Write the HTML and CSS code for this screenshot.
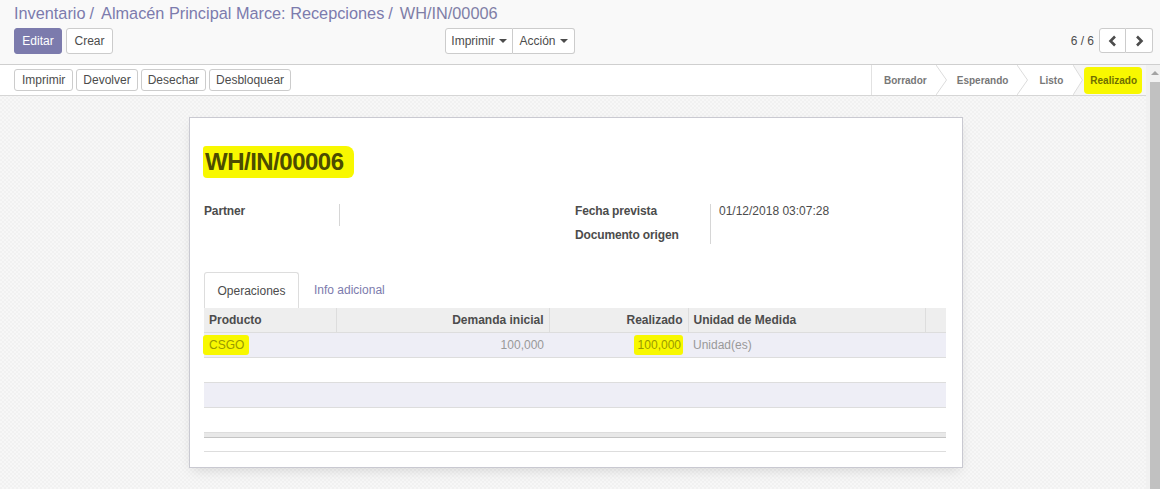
FILE: index.html
```html
<!DOCTYPE html>
<html lang="es">
<head>
<meta charset="utf-8">
<title>WH/IN/00006</title>
<link rel="stylesheet" href="styles.css">
</head>
<body>
<div class="cp">
  <div class="bc">
    <span class="bc-link">Inventario</span><span class="bc-sep">/</span><span class="bc-link">Almacén Principal Marce: Recepciones</span><span class="bc-sep">/</span><span class="bc-active">WH/IN/00006</span>
  </div>
  <div class="cp-row">
    <div class="cp-left">
      <div class="cp-buttons">
        <button class="btn btn-primary">Editar</button>
        <button class="btn">Crear</button>
      </div>
      <div class="btn-group">
        <button class="btn btn-dd">Imprimir <span class="caret"></span></button>
        <button class="btn btn-dd">Acción <span class="caret"></span></button>
      </div>
    </div>
    <div class="cp-right">
      <span class="pager-val">6 / 6</span>
      <div class="btn-group">
        <button class="btn btn-pager"><svg width="10" height="12" viewBox="0 0 10 12"><polyline points="7,1.5 2.5,6 7,10.5" fill="none" stroke="#4c4c4c" stroke-width="2.6"/></svg></button>
        <button class="btn btn-pager"><svg width="10" height="12" viewBox="0 0 10 12"><polyline points="3,1.5 7.5,6 3,10.5" fill="none" stroke="#4c4c4c" stroke-width="2.6"/></svg></button>
      </div>
    </div>
  </div>
</div>
<div class="main">
  <div class="content">
    <div class="statusbar">
      <div class="sb-buttons">
        <button class="btn btn-sb">Imprimir</button>
        <button class="btn btn-sb">Devolver</button>
        <button class="btn btn-sb">Desechar</button>
        <button class="btn btn-sb">Desbloquear</button>
      </div>
      <div class="states">
        <span class="state s1">Borrador</span>
        <svg class="arrow" width="11" height="30" viewBox="0 0 11 30"><polyline points="0,0 10.5,15 0,30" fill="none" stroke="#dcdcdc"/></svg>
        <span class="state s2">Esperando</span>
        <svg class="arrow" width="11" height="30" viewBox="0 0 11 30"><polyline points="0,0 10.5,15 0,30" fill="none" stroke="#dcdcdc"/></svg>
        <span class="state s3">Listo</span>
        <svg class="arrow" width="10" height="30" viewBox="0 0 10 30"><polygon points="0,0 10,0 10,30 0,30 9.5,15" fill="#f6f6f6"/><polyline points="0,0 9.5,15 0,30" fill="none" stroke="#dcdcdc"/></svg>
        <span class="state state-active"><span class="hl hl-state">Realizado</span></span>
      </div>
    </div>
    <div class="sheet-bg">
      <div class="sheet">
        <h1 class="title"><span class="hl hl-title">WH/IN/00006</span></h1>
        <div class="groups">
          <div class="group">
            <div class="field-row r1">
              <div class="label">Partner</div>
              <div class="value"></div>
            </div>
          </div>
          <div class="group">
            <div class="field-row r1">
              <div class="label">Fecha prevista</div>
              <div class="value">01/12/2018 03:07:28</div>
            </div>
            <div class="field-row r2">
              <div class="label">Documento origen</div>
              <div class="value"></div>
            </div>
          </div>
        </div>
        <div class="tabs">
          <div class="tab tab-active">Operaciones</div>
          <div class="tab">Info adicional</div>
        </div>
        <table class="list">
          <thead>
            <tr>
              <th class="c1">Producto</th>
              <th class="c2 num">Demanda inicial</th>
              <th class="c3 num">Realizado</th>
              <th class="c4">Unidad de Medida</th>
              <th class="c5"></th>
            </tr>
          </thead>
          <tbody>
            <tr class="odd">
              <td><span class="hl hl-cell">CSGO</span></td>
              <td class="num">100,000</td>
              <td class="num"><span class="hl hl-cell">100,000</span></td>
              <td>Unidad(es)</td>
              <td></td>
            </tr>
            <tr><td colspan="5"></td></tr>
            <tr class="odd"><td colspan="5"></td></tr>
            <tr><td colspan="5"></td></tr>
          </tbody>
          <tfoot>
            <tr class="foot1"><td colspan="5"></td></tr>
            <tr class="foot2"><td colspan="5"></td></tr>
          </tfoot>
        </table>
      </div>
    </div>
  </div>
  <div class="scrollbar">
    <div class="sc-up"></div>
    <div class="sc-thumb"></div>
  </div>
</div>
</body>
</html>
```

FILE: styles.css
```css
* { box-sizing: border-box; }
html, body { margin: 0; padding: 0; }
body {
  width: 1160px;
  height: 489px;
  overflow: hidden;
  font-family: "Liberation Sans", Arial, sans-serif;
  font-size: 12px;
  color: #4c4c4c;
  background: #f9f9f9;
}
button { font-family: inherit; }

/* Control panel */
.cp {
  height: 65px;
  background: #f9f9f9;
  border-bottom: 1px solid #cfcfcf;
  padding: 3px 7px 0 14px;
}
.bc {
  font-size: 16.3px;
  line-height: 21px;
  height: 21px;
  color: #7c7bad;
  white-space: nowrap;
}
.bc-sep { margin: 0 7px 0 4px; color: #7c7bad; }
.bc-active { color: #7f7ea6; }
.cp-row {
  display: flex;
  margin-top: 4px;
  height: 26px;
}
.cp-left {
  width: 561px;
  display: flex;
  justify-content: space-between;
}
.cp-buttons { display: flex; gap: 4px; }
.cp-right {
  flex: 1;
  display: flex;
  justify-content: flex-end;
  align-items: center;
  gap: 5px;
  height: 25px;
}
.btn {
  height: 26px;
  padding: 0 10px;
  border: 1px solid #cccccc;
  border-radius: 3px;
  background: #ffffff;
  color: #4c4c4c;
  font-size: 12px;
  line-height: 24px;
  display: inline-flex;
  align-items: center;
  justify-content: center;
  white-space: nowrap;
}
.btn-primary {
  background: #7c7bad;
  border-color: #7c7bad;
  color: #ffffff;
  width: 48px;
  padding: 0;
}
.cp-buttons .btn:not(.btn-primary) { width: 47px; padding: 0; }
.btn-group { display: flex; }
.btn-group .btn { border-radius: 0; }
.btn-group .btn:first-child { border-radius: 3px 0 0 3px; }
.btn-group .btn:last-child { border-radius: 0 3px 3px 0; border-left: 0; }
.btn-dd:first-child { width: 68px; padding: 0; }
.btn-dd:last-child { width: 62px; padding: 0; }
.caret {
  display: inline-block;
  width: 0; height: 0;
  margin-left: 4px;
  border-left: 4px solid transparent;
  border-right: 4px solid transparent;
  border-top: 4px solid #4c4c4c;
}
.pager-val { font-size: 12px; color: #4c4c4c; }
.btn-pager { width: 27px; height: 25px; padding: 0; }
.btn-group .btn-pager:first-child { width: 27px; }

/* Main */
.main {
  display: flex;
  height: 424px;
}
.content {
  width: 1146px;
  display: flex;
  flex-direction: column;
  background-color: #f4f4f4;
  background-image: repeating-conic-gradient(#f1f1f1 0 25%, #f7f7f7 0 50%);
  background-size: 4px 4px;
}
.statusbar {
  height: 31px;
  background: #ffffff;
  border-bottom: 1px solid #d6d6d6;
  display: flex;
  justify-content: space-between;
  flex-shrink: 0;
}
.sb-buttons {
  display: flex;
  align-items: center;
  gap: 3px;
  padding-left: 14px;
}
.btn-sb { height: 22px; line-height: 20px; padding: 0 6px; }
.btn-sb:first-child { padding: 0 7px; }
.states {
  display: flex;
  align-items: stretch;
  border-left: 1px solid #e2e2e2;
  height: 30px;
}
.state {
  display: flex;
  align-items: center;
  font-size: 10px;
  font-weight: bold;
  color: #777777;
}
.s1 { padding: 0 9px 0 12px; }
.s2 { padding: 0 9px 0 10px; }
.s3 { padding: 0 10px 0 11px; }
.arrow { display: block; flex-shrink: 0; }
.state-active {
  background: #f6f6f6;
  padding: 0 4px 0 1px;
}
.hl { background: #f8f800; }
.hl-state {
  color: #6e6e00;
  padding: 8px 5px 8px 6px;
  border-radius: 4px;
}

.sheet-bg {
  flex: 1;
  padding: 21px 0 0 189px;
}
.sheet {
  width: 774px;
  height: 351px;
  background: #ffffff;
  border: 1px solid #c9c9d1;
  box-shadow: 0 5px 12px -3px rgba(0,0,0,0.13);
  padding: 28px 15px 0 14px;
}
.title {
  margin: 0;
  font-size: 24px;
  line-height: 28px;
  font-weight: bold;
  letter-spacing: -0.5px;
  color: #4c4c00;
}
.hl-title {
  display: inline-block;
  padding: 2px 10px 2px 2px;
  margin-left: -1px;
  border-radius: 3px 8px 6px 4px;
}
.groups {
  display: flex;
  margin-top: 26px;
}
.group { width: 371px; }
.group + .group { width: 370px; }
.field-row {
  display: flex;
}
.r1 { height: 22px; line-height: 15px; }
.r2 { height: 18px; line-height: 18px; }
.label {
  width: 136px;
  font-weight: bold;
  color: #4c4c4c;
  letter-spacing: -0.15px;
  border-right: 1px solid #d6d6d6;
}
.value {
  padding: 0 0 0 8px;
  color: #4c4c4c;
}

.tabs {
  display: flex;
  margin-top: 28px;
  height: 36px;
}
.tab {
  padding: 0 15px;
  line-height: 36px;
  color: #7c7bad;
  font-size: 12px;
}
.tab-active {
  color: #4c4c4c;
  border: 1px solid #dddddd;
  border-bottom: 0;
  border-radius: 3px 3px 0 0;
  width: 95px;
  padding: 0;
  text-align: center;
}

.list {
  width: 742px;
  border-collapse: collapse;
  table-layout: fixed;
}
.list th {
  height: 24px;
  background: #eeeeee;
  border-bottom: 1px solid #dddddd;
  border-left: 1px solid #dddddd;
  padding: 0 5px;
  text-align: left;
  font-weight: bold;
  color: #4c4c4c;
  font-size: 12px;
}
.list th:first-child { border-left: 0; }
.c1 { width: 132px; }
.c2 { width: 213px; }
.c3 { width: 139px; }
.c4 { width: 237px; }
.c5 { width: 21px; }
.list th.num, .list td.num { text-align: right; }
.list td {
  height: 25px;
  padding: 0 5px;
  border-bottom: 1px solid #dddddd;
  color: #999999;
  font-size: 12px;
  white-space: nowrap;
}
.list tr.odd td { background: #eeeef6; }
.hl-cell {
  color: #9a9a00;
  padding: 3px 2px 3px 4px;
  border-radius: 3px;
}
.list td:first-child .hl-cell { margin-left: -6px; padding: 3px 5px 3px 6px; }
.list tfoot .foot1 td {
  height: 5px;
  padding: 0;
  background: #e8e8e8;
  border-bottom: 1px solid #c4c4c4;
}
.list tfoot .foot2 td {
  height: 14px;
  padding: 0;
  background: #ffffff;
  border-bottom: 1px solid #dddddd;
}

/* scrollbar */
.scrollbar {
  width: 14px;
  background: #f1f1f1;
}
.sc-up {
  width: 0; height: 0;
  margin: 6px 0 0 5px;
  border-left: 4px solid transparent;
  border-right: 4px solid transparent;
  border-bottom: 4px solid #a3a3a3;
}
.sc-thumb {
  margin: 7px 0 0 4px;
  height: 420px;
  background: #c1c1c1;
}
```
